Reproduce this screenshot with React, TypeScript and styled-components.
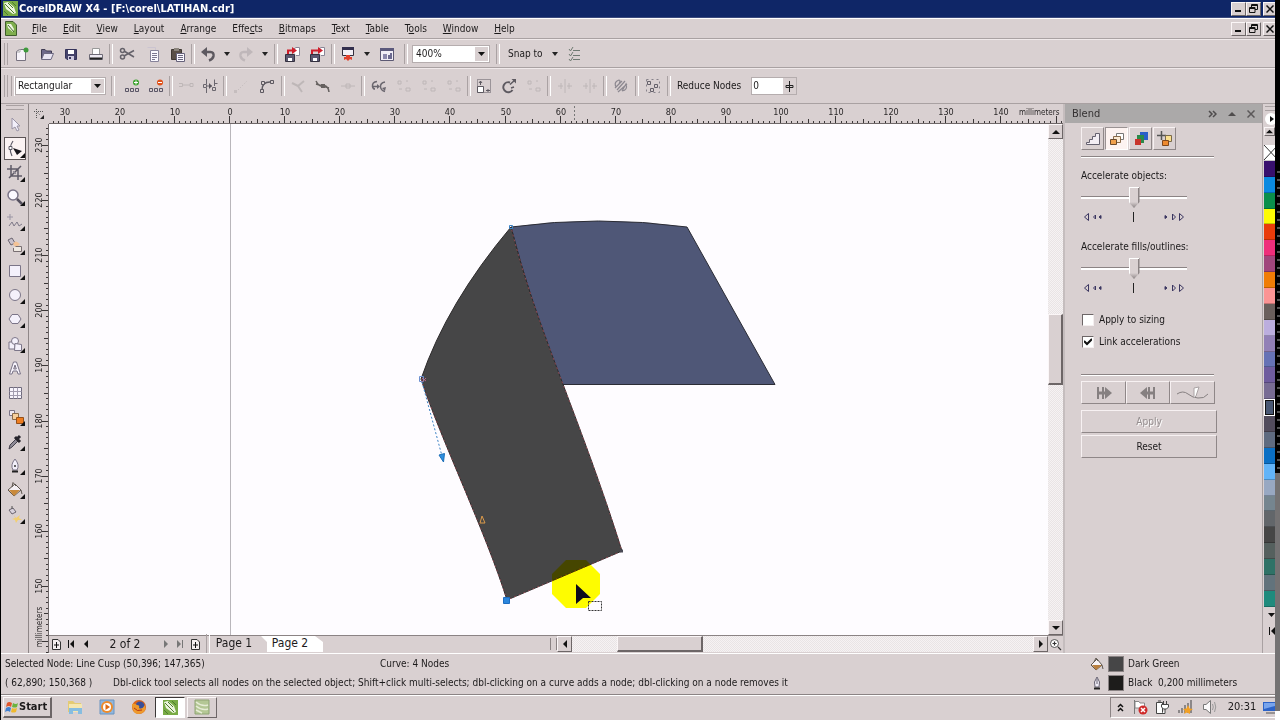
import React from "react";
import styled, { createGlobalStyle, css } from "styled-components";

const face = "#d9d0d1";
const dark = "#8b8384";
const sans = '"DejaVu Sans Condensed", "DejaVu Sans", "Liberation Sans", sans-serif';

const Global = createGlobalStyle`
  * { box-sizing: border-box; }
  html, body { margin: 0; padding: 0; }
  body { background: ${face}; color: #1c1a1b; font: 10px/14px ${sans}; white-space: nowrap; }
  button, input, select { font: inherit; color: inherit; margin: 0; }
  button { border: 0; padding: 0; background: none; }
  svg { display: block; flex: none; }
`;

const Screen = styled.div`
  display: flex;
  min-height: 100vh;
  border-left: 1px solid #000;
`;
const Main = styled.div`
  flex: 1;
  min-width: 0;
  display: flex;
  flex-direction: column;
`;
const Edge = styled.div`
  flex: none;
  width: 5px;
  background:
    repeating-linear-gradient(transparent 0 6px, rgba(120, 120, 120, 0.7) 6px 8px) 2px 165px / 3px 308px no-repeat,
    linear-gradient(#000 0 473px, #747273 473px 711px, #fff 711px);
`;

const raised = css`
  border: 1px solid;
  border-color: #fbf6f7 #6d6667 #6d6667 #fbf6f7;
  background: ${face};
`;

/* ---------- title and menu ---------- */
const TitleBar = styled.header`
  display: flex;
  align-items: center;
  height: 18px;
  padding-left: 2px;
  background: #0f2667;
  border-bottom: 1px solid #3b4a7e;
  color: #fff;
`;
const Title = styled.h1`
  flex: 1;
  margin: 0 0 0 1px;
  font: bold 11px/16px ${sans};
`;
const MenuBar = styled.nav`
  display: flex;
  align-items: center;
  height: 21px;
  padding-left: 4px;
  border-top: 1px solid #fff;
  border-bottom: 1px solid #a9a1a2;
`;
const Menus = styled.div`
  flex: 1;
  display: flex;
  gap: 16px;
  padding: 1px 0 0 15px;
`;
const MenuItem = styled.button`
  line-height: 16px;
`;
const WinButtons = styled.div`
  display: flex;
  align-items: center;
`;
const WinButton = styled.button<{ $cut?: boolean }>`
  ${raised}
  display: flex;
  align-items: center;
  justify-content: center;
  width: ${(p) => (p.$cut ? 12 : 15)}px;
  height: 14px;
  margin-left: ${(p) => (p.$cut ? 2 : 0)}px;
  border-right-width: ${(p) => (p.$cut ? 0 : 1)}px;
`;

/* ---------- toolbars ---------- */
const Bar = styled.div<{ $h: number }>`
  display: flex;
  align-items: center;
  height: ${(p) => p.$h}px;
  border-top: 1px solid #f0e9ea;
  border-bottom: 1px solid #a9a1a2;
`;
const Grip = styled.span`
  flex: none;
  width: 4px;
  height: 22px;
  margin: 0 2px 0 3px;
  border: solid #aaa2a3;
  border-width: 0 1px;
`;
const Sep = styled.span<{ $w?: number }>`
  flex: none;
  display: flex;
  justify-content: center;
  width: ${(p) => p.$w ?? 6}px;
  &::after {
    content: "";
    width: 2px;
    height: 20px;
    border-left: 1px solid #aaa2a3;
    border-right: 1px solid #fff;
  }
`;
const Tool = styled.button<{ $w?: number; $off?: boolean }>`
  flex: none;
  display: flex;
  align-items: center;
  justify-content: center;
  width: ${(p) => p.$w ?? 24}px;
  height: 22px;
  opacity: ${(p) => (p.$off ? 0.2 : 1)};
`;
const Combo = styled.span<{ $w: number; $pad?: number }>`
  flex: none;
  position: relative;
  display: block;
  width: ${(p) => p.$w}px;
  height: 18px;
  background: #fff;
  border: 1px solid #b5adae;
  select {
    width: 100%;
    height: 16px;
    padding: 0 ${(p) => p.$pad ?? 2}px;
    border: 0;
    background: none;
    appearance: none;
    line-height: 16px;
  }
  svg {
    position: absolute;
    top: 1px;
    right: 1px;
    background: ${face};
    pointer-events: none;
  }
`;
const BarText = styled.span`
  padding: 0 5px 0 2px;
`;
const Spin = styled.label`
  display: flex;
  align-items: center;
  padding-left: 3px;
`;
const SpinBox = styled.span`
  display: flex;
  width: 46px;
  height: 18px;
  margin-left: 5px;
  border: 1px solid #b5adae;
  background: #fff;
  input {
    width: 31px;
    padding: 0 1px;
    border: 0;
    background: none;
    outline: 0;
  }
  svg { background: ${face}; }
`;

/* ---------- work area ---------- */
const Work = styled.div`
  flex: 1;
  display: grid;
  grid-template-columns: 28px minmax(0, 1fr) 200px 12px;
`;
const Toolbox = styled.div`
  padding-top: 1px;
  border-right: 1px solid #8f8788;
`;
const BoxGrip = styled.div`
  height: 5px;
  margin: 0 4px 2px 5px;
  border: solid #a9a1a2;
  border-width: 1px 0;
`;
const BoxTools = styled.div`
  display: grid;
  grid-auto-rows: 1fr;
  height: 415px;
  padding: 0 3px;
`;
const BoxTool = styled.button<{ $on?: boolean }>`
  display: flex;
  align-items: center;
  justify-content: center;
  margin: 1px 0;
  border: 1px solid ${(p) => (p.$on ? "#5c5556" : "transparent")};
  background: ${(p) => (p.$on ? "#fbf3f3" : "none")};
`;
const Document = styled.div`
  display: grid;
  grid-template-columns: 20px minmax(0, 1fr) 15px;
  grid-template-rows: 20px minmax(0, 1fr) 18px;
`;
const Corner = styled.div`
  display: flex;
  align-items: center;
  justify-content: center;
`;
const HRuler = styled.div`
  grid-column: 2 / 4;
  display: grid;
  overflow: hidden;
  border-bottom: 1px solid #6f6869;
`;
const VRuler = styled.div`
  grid-row: 2 / 4;
  display: grid;
  overflow: hidden;
  border-right: 1px solid #6f6869;
`;
const RulerSvg = styled.svg`
  width: 100%;
  height: 100%;
  font: 9px ${sans};
  fill: #2a2728;
`;
const Canvas = styled.div`
  display: grid;
  overflow: hidden;
  background: #fefcff;
`;
const CanvasSvg = styled.svg`
  width: 100%;
  height: 100%;
`;
const dither = css`
  background: repeating-conic-gradient(#e9e4e5 0 25%, #f6f2f3 0 50%) 0 0 / 2px 2px;
`;
const VScroll = styled.div`
  ${dither}
  display: grid;
  grid-template-rows: 15px 176fr 71px 236fr 15px;
`;
const ScrollButton = styled.button`
  ${raised}
  display: flex;
  align-items: center;
  justify-content: center;
`;
const Thumb = styled.span`
  ${raised}
  border-right-width: 2px;
  border-bottom-width: 2px;
`;
const Foot = styled.div`
  grid-column: 2 / 4;
  display: flex;
  height: 17px;
  border-top: 1px solid #8b8384;
`;
const Pages = styled.div`
  flex: none;
  display: flex;
  align-items: center;
  width: 501px;
`;
const PageCount = styled.span`
  width: 64px;
  text-align: center;
  font-size: 12px;
`;
const NavButton = styled.button<{ $w: number }>`
  display: flex;
  align-items: center;
  justify-content: center;
  width: ${(p) => p.$w}px;
  height: 15px;
`;
const PageTab = styled.button<{ $on?: boolean }>`
  align-self: stretch;
  width: ${(p) => (p.$on ? 62 : 50)}px;
  padding: 0 8px 2px ${(p) => (p.$on ? 4 : 4)}px;
  font-size: 12px;
  background: ${(p) => (p.$on ? "#fff" : "none")};
  clip-path: ${(p) => (p.$on ? "polygon(0 0, calc(100% - 8px) 0, 100% 6px, 100% 100%, 6px 100%, 6px 6px)" : "none")};
`;
const Splitter = styled.span`
  width: 7px;
  margin: 2px 0;
  border: solid #8b8384;
  border-width: 0 1px;
`;
const HScroll = styled.div`
  ${dither}
  flex: 1;
  display: grid;
  grid-template-columns: 15px 45fr 86px 331fr 15px;
`;
const ZoomCorner = styled.button`
  display: flex;
  align-items: center;
  justify-content: center;
  width: 15px;
`;

/* ---------- docker ---------- */
const Docker = styled.aside`
  border-left: 2px solid #c5bdbe;
  border-right: 1px solid #a9a1a2;
`;
const DockHead = styled.div`
  display: flex;
  align-items: center;
  height: 19px;
  padding: 0 2px 0 7px;
  background: #aba9a9;
  color: #343132;
  font-size: 11px;
  span { flex: 1; }
  button { width: 19px; display: flex; justify-content: center; }
`;
const DockBody = styled.div`
  padding: 4px 0 0 16px;
`;
const ModeRow = styled.div`
  display: flex;
  gap: 1px;
`;
const Mode = styled.button<{ $on?: boolean }>`
  ${raised}
  display: flex;
  align-items: center;
  justify-content: center;
  width: 23px;
  height: 23px;
  border-color: ${(p) => (p.$on ? "#9a9293 #fff #fff #9a9293" : "#f7f1f2 #8f8788 #8f8788 #f7f1f2")};
  background: ${(p) => (p.$on ? "#fdf3f1" : face)};
`;
const Rule = styled.div<{ $top: number }>`
  width: 133px;
  height: 2px;
  margin-top: ${(p) => p.$top}px;
  border-top: 1px solid #8b8384;
  border-bottom: 1px solid #fff;
`;
const Field = styled.label<{ $top: number }>`
  display: block;
  height: 45px;
  margin-top: ${(p) => p.$top}px;
`;
const Slider = styled.input`
  display: block;
  width: 106px;
  height: 21px;
  margin-top: 4px;
  appearance: none;
  background: linear-gradient(#8b8384 0 1px, #fff 1px 3px) 0 9px / 106px 3px no-repeat;
  &::-webkit-slider-thumb {
    appearance: none;
    width: 11px;
    height: 21px;
    background:
      linear-gradient(#fff, #fff) 0 0 / 10px 1px no-repeat,
      linear-gradient(transparent, #8b8384) 0 15px / 11px 6px no-repeat,
      linear-gradient(90deg, #fff 0 1px, ${face} 1px 9px, ${dark} 9px);
    clip-path: polygon(0 0, 100% 0, 100% 15px, 50% 100%, 0 15px);
  }
`;
const Hints = styled.svg`
  width: 106px;
  height: 14px;
  margin-top: 2px;
`;
const Check = styled.label<{ $top: number }>`
  display: flex;
  align-items: center;
  height: 14px;
  margin-top: ${(p) => p.$top}px;
`;
const Tick = styled.span`
  position: relative;
  width: 12px;
  height: 12px;
  margin: 0 5px 0 1px;
  input {
    display: block;
    width: 12px;
    height: 12px;
    appearance: none;
    background: #fff;
    border: 1px solid;
    border-color: #6d6667 #f4eeef #f4eeef #6d6667;
  }
  svg { position: absolute; top: 2px; left: 2px; display: none; pointer-events: none; }
  input:checked + svg { display: block; }
`;
const EndRow = styled.div`
  display: grid;
  grid-template-columns: 45px 44px 45px;
  height: 23px;
  margin: 5px 0 6px;
`;
const PushButton = styled.button<{ $dim?: boolean }>`
  ${raised}
  display: flex;
  align-items: center;
  justify-content: center;
  border-color: #f7f1f2 #8f8788 #8f8788 #f7f1f2;
  color: ${(p) => (p.$dim ? "#958e8f" : "inherit")};
  text-shadow: ${(p) => (p.$dim ? "1px 1px #fff" : "none")};
`;
const WideButton = styled(PushButton)`
  width: 136px;
  height: 23px;
  margin-bottom: 2px;
`;

/* ---------- colour palette ---------- */
const Palette = styled.div`
  display: flex;
  flex-direction: column;
  padding-left: 1px;
  overflow: hidden;
`;
const PaletteTop = styled.div`
  height: 41px;
  display: flex;
  flex-direction: column;
  gap: 2px;
  padding-top: 2px;
`;
const PaletteTail = styled.div`
  height: 46px;
  display: flex;
  flex-direction: column;
  gap: 8px;
  padding-top: 4px;
`;
const PaletteGrip = styled(BoxGrip)`
  margin: 0 0 0 1px;
`;
const Swatch = styled.button<{ $c: string; $on?: boolean }>`
  flex: 1;
  min-height: 0;
  overflow: hidden;
  background: ${(p) => p.$c};
  border: ${(p) => (p.$on ? "1px solid #fff" : "0 solid")};
  border-bottom: 1px solid ${(p) => (p.$on ? "#fff" : "rgba(0,0,0,.22)")};
  box-shadow: ${(p) => (p.$on ? "inset 0 0 0 1px #111" : "none")};
`;

/* ---------- status and taskbar ---------- */
const Status = styled.footer`
  display: grid;
  grid-template-columns: minmax(0, 1fr) 186px;
  height: 42px;
  padding: 0 0 3px 4px;
  border-top: 1px solid #fff;
  border-bottom: 1px solid #8b8384;
`;
const StatusLine = styled.div<{ $gap: number }>`
  display: flex;
  align-items: center;
  height: 19px;
  > :first-child { width: ${(p) => p.$gap}px; }
`;
const ColorLine = styled.div`
  display: flex;
  align-items: center;
  height: 19px;
  padding-left: 1px;
  gap: 4px;
`;
const Chip = styled.span<{ $c: string }>`
  width: 16px;
  height: 16px;
  background: ${(p) => p.$c};
  border: 1px solid #8a8384;
`;
const TaskBar = styled.div`
  display: flex;
  align-items: center;
  height: 25px;
  padding: 0 0 2px 2px;
  border-top: 1px solid #fff;
`;
const Start = styled.button`
  ${raised}
  display: flex;
  align-items: center;
  width: 49px;
  height: 21px;
  margin-right: 7px;
  padding-left: 1px;
  border-right-width: 2px;
  border-bottom-width: 2px;
  font-weight: bold;
  font-size: 11px;
`;
const Task = styled.button<{ $look?: "on" | "up" }>`
  display: flex;
  align-items: center;
  justify-content: center;
  width: ${(p) => (p.$look ? 30 : 32)}px;
  height: 21px;
  margin-right: ${(p) => (p.$look ? 2 : 0)}px;
  ${(p) => p.$look === "up" && raised}
  ${(p) => p.$look === "on" && "background:#fff;border:1px solid;border-color:#3c3838 #fff #fff #3c3838;"}
`;
const Tray = styled.div`
  display: flex;
  align-items: center;
  height: 21px;
  margin-left: auto;
  border: solid;
  border-width: 1px 0 1px 1px;
  border-color: #8b8384 #fff #fff #8b8384;
`;
const TrayButton = styled.button<{ $w: number }>`
  display: flex;
  align-items: center;
  justify-content: center;
  width: ${(p) => p.$w}px;
  height: 19px;
`;
const Clock = styled.time`
  width: 42px;
  text-align: center;
  font-size: 11px;
`;

/* ---------- icons ---------- */
type IcProps = { w?: number; h?: number; children: React.ReactNode; vb?: string };
const Ic = ({ w = 16, h = 16, vb, children }: IcProps) => (
  <svg width={w} height={h} viewBox={vb ?? `0 0 ${w} ${h}`} fill="none" aria-hidden="true">
    {children}
  </svg>
);
const Tri = ({ d, c = "#111", s = 8 }: { d: "u" | "d" | "l" | "r"; c?: string; s?: number }) => {
  const p = { u: "M0 6L4 2L8 6Z", d: "M0 2L4 6L8 2Z", l: "M6 0L2 4L6 8Z", r: "M2 0L6 4L2 8Z" }[d];
  return <Ic w={s} h={s} vb="0 0 8 8"><path d={p} fill={c} /></Ic>;
};
const Caret = () => <Ic w={6} h={4}><path d="M0 0H6L3 4Z" fill="#222" /></Ic>;
const DropMark = ({ h = 14 }: { h?: number }) => (
  <Ic w={13} h={h}><path d={`M3 ${h / 2 - 2}H10L6.5 ${h / 2 + 2}Z`} fill="#111" /></Ic>
);
const CorelIcon = ({ s = 15 }: { s?: number }) => (
  <Ic w={s} h={s} vb="0 0 15 15">
    <path d="M0 0H15V15H0Z" fill="#79ab45" />
    <path d="M1 2L5 1L11 6L13 12L10 13L3 8Z" fill="#eef5df" />
    <path d="M2 3L11 12M5 2L10 7" stroke="#4d7d2c" />
    <path d="M9 1L13 5M1 10L5 14" stroke="#4d7d2c" />
  </Ic>
);
const DocIcon = () => (
  <Ic w={12} h={15}>
    <path d="M.5.5H8L11.5 4V14.5H.5Z" fill="#7fae4d" stroke="#3f5d2b" />
    <path d="M2 3L6 3L9 8L8 11L3 7Z" fill="#eff5e2" /><path d="M3 4L9 11" stroke="#44702b" />
  </Ic>
);
const Restore = () => <Ic w={9} h={9}><path d="M2.500 3V.5H8.500V5.500H6M2 1.500H8M.5 3.500H6V8.500H.5ZM.5 4.500H6" stroke="#111" /></Ic>;
const Minim = () => <Ic w={9} h={9}><path d="M1 7H7" stroke="#111" strokeWidth="2" /></Ic>;
const Cross = ({ c = "#111" }: { c?: string }) => <Ic w={8} h={8}><path d="M.5.5L7.500 7.500M7.500.5L.5 7.500" stroke={c} strokeWidth="1.500" /></Ic>;

const g = "#5d5960";
const NewIcon = () => <Ic><path d="M2.500 5.500L5.500 3.500H11.500V14.500H2.500Z" fill="#f7f3fa" stroke="#77727f" /><path d="M3 6H6V3" stroke="#aaa" /><circle cx="12" cy="4" r="2.500" fill="#3e9a3c" /></Ic>;
const OpenIcon = () => <Ic><path d="M2.500 13V3.500H6L7.500 5H12.500V7" stroke="#3f3b52" fill="#6d688a" /><path d="M2.500 13.500L5 7.500H14.500L12 13.500Z" fill="#e8e4f2" stroke="#6e6a82" /></Ic>;
const SaveIcon = () => <Ic><path d="M2.500 3.500H13.500V13.500H4L2.500 12Z" fill="#45436b" stroke="#35335a" /><path d="M5 4H11V8H5Z" fill="#fff" /><path d="M5 10H11V14H5Z" fill="#cfcbe0" /><path d="M6 11H8V13H6Z" fill="#35335a" /></Ic>;
const PrintIcon = () => <Ic><path d="M4.500 8V2.500H11.500V8" fill="#fff" stroke="#999" /><path d="M1.500 8.500H14.500V13.500H1.500Z" fill="#eeeaf2" stroke="#6d6a76" /><path d="M2 12.500H14" stroke="#222" strokeWidth="2" /></Ic>;
const CutIcon = () => <Ic><path d="M5 5L15 11M5 10L15 4.500" stroke="#65626a" strokeWidth="1.500" /><circle cx="3.500" cy="4.500" r="2" stroke="#65626a" strokeWidth="1.500" /><circle cx="3.500" cy="11" r="2" stroke="#65626a" strokeWidth="1.500" /></Ic>;
const CopyIcon = () => <Ic><path d="M2.500 1.500H10.500V4" stroke="#cbc4d0" /><path d="M5.500 4.500H13.500V15.500H5.500Z" fill="#fbf9ff" stroke="#87839a" /><path d="M7 7.500H12M7 9.500H12M7 11.500H12M7 13.500H10" stroke="#7b7790" /></Ic>;
const PasteIcon = () => <Ic><path d="M1.500 3.500H11.500V13.500H1.500Z" fill="#5a4f47" stroke="#3f3833" /><path d="M4 2H9V5H4Z" fill="#8b847c" /><path d="M6.500 7.500H14.500V15.500H6.500Z" fill="#fbf9ff" stroke="#66627a" /><path d="M8 9.500H13M8 11.500H13M8 13.500H13" stroke="#6b6780" /></Ic>;
const UndoIcon = ({ flip }: { flip?: boolean }) => (
  <Ic><g transform={flip ? "translate(16 0) scale(-1 1)" : undefined}>
    <path d="M5 6H10.500Q14 6 13.500 10Q13 13 9 14.500" stroke={g} strokeWidth="2.500" /><path d="M1 6L7 1V11Z" fill={g} />
  </g></Ic>
);
const TransferIcon = ({ out }: { out?: boolean }) => (
  <Ic><path d="M1.500 8.500H10.500V15.500H1.500Z" fill="#5b5870" stroke="#33303f" /><path d="M4 12H8V15H4Z" fill="#fff" />
    <path d="M9 3.500L12 1.500H15.500V9.500H12" fill="#fff" stroke="#8a8697" />
    <path d={out ? "M3 8V4.500H9" : "M4 8V4.500H9"} stroke="#cf1d2a" strokeWidth="2" /><path d={out ? "M9 1L14 4.500L9 8Z" : "M8 1L13 4.500L8 8Z"} fill="#cf1d2a" /></Ic>
);
const LaunchIcon = () => <Ic><path d="M2.500 1.500H13.500V9.500H2.500Z" fill="#f3f0f6" stroke="#332f3d" /><path d="M2 1H14V4H2Z" fill="#332f4d" /><path d="M6 9H10V11H12V14L10 13L8 15L6 13L4 14V11H6Z" fill="#e2402c" /></Ic>;
const WelcomeIcon = () => <Ic><path d="M1.500 2.500H14.500V14.500H1.500Z" fill="#f1eef7" stroke="#5c5973" /><path d="M1 2H15V5H1Z" fill="#5b597c" /><path d="M4 8H8V13H4Z" fill="#8b88ad" /><path d="M9 9H11V13H9ZM11 7H13V13H11Z" fill="#6c6a90" /></Ic>;
const OptionsIcon = () => <Ic><path d="M2 3L3.500 5L6 1M2 8L3.500 10L6 6M2 13L3.500 15L6 11M6 4.500H13M6 9.500H13M6 13.500H13" stroke="#6f7a72" /></Ic>;

const NodeIcon = ({ plus }: { plus?: boolean }) => (
  <Ic><path d="M1.500 10.500H4.500V13.500H1.500ZM6.500 10.500H9.500V13.500H6.500ZM11.500 10.500H14.500V13.500H11.500Z" stroke="#5b5767" />
    <circle cx="12" cy="4.500" r="3" fill={plus ? "#3da32f" : "#e0521b"} /><path d={plus ? "M10 4.500H14M12 2.500V6.500" : "M10 4.500H14"} stroke="#fff" /></Ic>
);
const JoinIcon = () => <Ic><path d="M1 8.500H4.500V5.500H1M12 5.500H15V8.500H12ZM5 7H12" stroke="#555" /></Ic>;
const BreakIcon = () => <Ic><path d="M4.500 1V6M4.500 10V15M12.500 5V8M1.500 6.500H4.500V9.500H1.500ZM10.500 9.500H13.500V12.500H10.500ZM12.500 1.500V5.500H15.500M5 8H10" stroke="#6a666e" /><path d="M7 5L10 8L7 11Z" fill="#5a565e" /></Ic>;
const LineIcon = () => <Ic><path d="M3 14L14 3" stroke="#555" strokeDasharray="1 2" /><path d="M1 12H4V15H1Z" fill="#777" /></Ic>;
const CurveIcon = () => <Ic><path d="M3 12Q3 4 11 4" stroke={g} strokeWidth="1.500" /><path d="M1.500 11.500H4.500V14.500H1.500ZM11.500 2.500H14.500V5.500H11.500ZM2.500 3.500H5.500V6.500H2.500Z" stroke={g} fill={face} /></Ic>;
const CuspIcon = () => <Ic><path d="M2 5L8 8L14 3M8 8L12 14" stroke="#555" strokeWidth="2" /></Ic>;
const SmoothIcon = () => <Ic><path d="M1 3Q4 9 8 8Q13 7 14 14M1 6L14 10" stroke="#65605f" strokeWidth="1.500" /><path d="M6 6H10V10H6Z" fill="#65605f" /></Ic>;
const SymIcon = () => <Ic><path d="M1 8H15M6 6H10V10H6Z" stroke="#555" /></Ic>;
const ReverseIcon = () => <Ic><path d="M6 3.500Q1 4 1.500 8.500Q2 11 4 11M2 8.500H7M14 4Q9 5 9.500 9Q10 12.500 14 13.500" stroke="#6a666e" strokeWidth="1.500" /><path d="M6 6L9 8.500L6 11ZM11 10L15 9L14 13Z" fill="#6a666e" /></Ic>;
const DotsIcon = () => <Ic><path d="M2 3H5V6H2ZM10 10H14V13H10ZM10 3H12M3 11H6" stroke="#555" /></Ic>;
const StretchIcon = () => <Ic><path d="M1.500 1.500H14.500V14.500H1.500Z" stroke={g} strokeDasharray="1 1" /><path d="M1.500 8.500H7.500V14.500H1.500Z" fill="#fff" stroke={g} /><path d="M4.500 3V7M10 12.500H14M4.500 3L3 5M4.500 3L6 5M12 11V14" stroke={g} /></Ic>;
const RotateIcon = () => <Ic><path d="M9 4.500A5 5 0 1 0 11.500 12" stroke={g} strokeWidth="2" /><path d="M9 6.500L14 2M10 10L13 9" stroke={g} strokeWidth="1.500" /><path d="M10.500 1H15V5.500Z" fill={g} /></Ic>;
const AlignIcon = () => <Ic><path d="M8 1V15M1 8H6M10 8H15M4 5V11M12 5V11" stroke="#555" /></Ic>;
const ElasticIcon = () => <Ic><path d="M3 9Q1 5 4 3L6 2Q8 2 6 6ZM9 13Q15 12 13 6L9 13M4 12L12 3M5 14L14 6M2 10L9 3" stroke="#8c8890" strokeWidth="1.200" /></Ic>;
const SelectAllIcon = () => <Ic><path d="M1.500 1.500H14.500V14.500H1.500Z" stroke="#87828a" strokeDasharray="2 3" /><path d="M2.500 3.500H5.500V6.500H2.500ZM9.500 6.500H12.500V9.500H9.500ZM5.500 10.500H8.500V13.500H5.500Z" stroke="#65616a" /></Ic>;

const fly = <path d="M20 14V19H15Z" fill="#111" />;
const Box = ({ children, more = true }: { children: React.ReactNode; more?: boolean }) => (
  <Ic w={20} h={20}>{children}{more && fly}</Ic>
);
const l = "#7b7588";
const boxTools: [string, React.ReactNode][] = [
  ["Pick", <Box more={false}><path d="M7 4V15L10 13L12 17L14 16L12 12H15Z" fill="#f2effa" stroke="#9a94a6" /></Box>],
  ["Shape", <Box><path d="M8 2Q3 9 7 17" stroke="#5c5a66" strokeWidth="1.200" /><path d="M4 7.500H7V10.500H4Z" fill="#fff" stroke="#5c5a66" /><path d="M8 9L17 12L12 16Z" fill="#16141a" /></Box>],
  ["Crop", <Box><path d="M6 2V13H17M2 6H13V17M4 15L16 3" stroke="#5f5b68" strokeWidth="1.500" /><path d="M8 8L11 11" stroke="#8f8a99" /></Box>],
  ["Zoom", <Box><circle cx="8" cy="8" r="5" fill="#fbf9ff" stroke={l} strokeWidth="1.500" /><path d="M12 12L17 17" stroke="#55515f" strokeWidth="2.500" /></Box>],
  ["Freehand", <Box><path d="M5 2V8M2 5H8" stroke="#9a95a4" /><path d="M4 14L7 10L9 14L12 10L14 14L17 12" stroke="#7d7888" /></Box>],
  ["Smart Fill", <Box><path d="M3 4L7 2L10 7L6 9Z" fill="#c9c2cc" stroke="#6b6570" /><path d="M8 8Q10 3 15 8L11 12Z" fill="#f4c396" /><path d="M10.500 10.500H16.500V15.500H8.500V12" fill="#efe9e2" stroke="#786f72" /></Box>],
  ["Rectangle", <Box><path d="M4.500 4.500H15.500V15.500H4.500Z" fill="#f4f1fb" stroke={l} /></Box>],
  ["Ellipse", <Box><circle cx="10" cy="10" r="5.500" fill="#f4f1fb" stroke={l} /></Box>],
  ["Polygon", <Box><path d="M7 5.500H13L16 10L13 14.500H7L4 10Z" fill="#f4f1fb" stroke={l} /></Box>],
  ["Basic Shapes", <Box><path d="M4 8H10V15H4Z" fill="#f4f1fb" stroke={l} /><circle cx="10" cy="7" r="3.500" fill="#f4f1fb" stroke={l} /><path d="M10 9.500L16.500 10.500V16.500H9.500Z" fill="#f4f1fb" stroke={l} /></Box>],
  ["Text", <Box more={false}><path d="M4.500 16L8.500 4H11.500L15.500 16H13L12 13H8L7 16ZM8.700 11H11.300L10 7Z" fill="#f8f5fd" stroke={l} /></Box>],
  ["Table", <Box more={false}><path d="M4.500 4.500H16.500V15.500H4.500Z" fill="#f8f5fd" stroke="#6f6a7c" /><path d="M8.500 4.500V15.500M12.500 4.500V15.500M4.500 8.500H16.500M4.500 12.500H16.500" stroke="#a39db0" /></Box>],
  ["Blend", <Box><path d="M4.500 3.500H9.500V8.500H4.500Z" fill="#eee9f2" stroke={l} /><path d="M7.500 6.500H13.500V12.500H7.500Z" fill="#f6cf9c" stroke="#8a6b4b" /><path d="M11.500 10.500H18.500V16.500H11.500Z" fill="#ee7d1f" stroke="#94501a" /></Box>],
  ["Eyedropper", <Box><path d="M4 17L5 13L11 7L13 9L7 15Z" fill="#8e8a96" stroke="#44414b" /><path d="M10 5L15 10M11 8L15 4" stroke="#26242b" strokeWidth="3" /></Box>],
  ["Outline", <Box><path d="M10 3Q5 9 8 14H12Q15 9 10 3Z" fill="#f3f0fa" stroke={l} /><circle cx="10" cy="10" r="1" fill="#333" /><path d="M7 15.500H13" stroke="#222" strokeWidth="2" /></Box>],
  ["Fill", <Box><path d="M3 10L10 4L16 10L9 16Z" fill="#f4f0f4" stroke="#5d564f" /><path d="M4 10H15L9 16Z" fill="#c98a3c" /><path d="M7 7L8 2.500L11 6M16 10L17 14" stroke="#5d564f" /></Box>],
  ["Interactive Fill", <Box><path d="M4 5L8 3L11 7L7 9Z" fill="#d8d2dc" stroke="#6b6570" /><path d="M7 4V1" stroke="#555" /><path d="M9 10L11 13L15 10L14 13L17 15L13 15L11 18L10 15L7 14L10 13Z" fill="#f3cf70" /></Box>],
];

const PlusPage = () => <Ic w={9} h={11}><path d="M.5.5H6L8.500 3V10.500H.5Z" fill="#f4eff0" stroke="#333" /><path d="M4.500 3V9M2 6H7" stroke="#111" /></Ic>;
const EndMark = ({ r, c = "#111" }: { r?: boolean; c?: string }) => <Ic w={8} h={8}><path d={r ? "M1 0L5 4L1 8Z" : "M7 0L3 4L7 8Z"} fill={c} /><path d={r ? "M6.500 0V8" : "M1.500 0V8"} stroke={c} /></Ic>;
const BucketIcon = () => <Ic w={14} h={14}><path d="M1 8L7 2L12 8L6 13Z" fill="#f7f3f5" stroke="#5d564f" /><path d="M2 8H12L6 13Z" fill="#b97f3e" /><path d="M4 5L6 1L8 4M12 8L13 12" stroke="#5d564f" /></Ic>;
const PenIcon = () => <Ic w={14} h={14}><path d="M7 1Q3 6 5 11H9Q11 6 7 1Z" fill="#f3f0fa" stroke="#65606f" /><path d="M7 3V8" stroke="#65606f" /><path d="M4 12.500H10" stroke="#222" strokeWidth="2" /></Ic>;

/* ---------- drawing data ---------- */
const UNIT = 5.51;
const HTicks = () => (
  <RulerSvg role="img" aria-label="Horizontal ruler">
    {Array.from({ length: 190 }, (_, i) => i - 32).map((n) => {
      const x = Math.round(180 + n * UNIT);
      const top = n % 10 === 0 ? 12 : n % 5 === 0 ? 15 : 17;
      return n > 152 ? null : <path key={n} d={`M${x + 0.5} ${top}V19`} stroke="#3a3637" />;
    })}
    {Array.from({ length: 18 }, (_, i) => i - 3).map((n) => (
      <text key={n} x={Math.round(181 + n * 10 * UNIT)} y="11" textAnchor="middle">{Math.abs(n * 10)}</text>
    ))}
    <path d="M525.500 2V18" stroke="#777" strokeDasharray="2 2" />
    <text x="970" y="11" fontSize="8">millimeters</text>
  </RulerSvg>
);
const VTicks = () => (
  <RulerSvg role="img" aria-label="Vertical ruler">
    {Array.from({ length: 96 }, (_, i) => i - 3).map((n) => {
      const y = Math.round(21 + n * UNIT);
      const left = n % 10 === 0 ? 13 : n % 5 === 0 ? 15 : 17;
      return <path key={n} d={`M${left} ${y + 0.5}H19`} stroke="#3a3637" />;
    })}
    {Array.from({ length: 9 }, (_, n) => (
      <text key={n} transform={`translate(13 ${Math.round(21 + n * 10 * UNIT)}) rotate(-90)`} textAnchor="middle">{230 - n * 10}</text>
    ))}
    <text transform="translate(13 503) rotate(-90)" textAnchor="middle" fontSize="8">millimeters</text>
  </RulerSvg>
);

const Artwork = () => (
  <CanvasSvg role="img" aria-label="Drawing">
    <g transform="translate(-49 -124)" fill="none">
      <path d="M230.500 120V900" stroke="#b9b6bb" />
      <path d="M511 227Q598 215 687 227L775 384.500H561Q530 300 511 227Z" fill="#4f5777" stroke="#2b2c35" />
      <path d="M511 227Q447 303 421 379C441 440 485 530 507 600L622 551C581 420 535 325 511 227Z" fill="#464647" stroke="#2d2b2c" />
      <path d="M421 379C441 440 485 530 507 600L622 551C581 420 535 325 511 227" stroke="#a4525a" strokeDasharray="2 3" strokeWidth="0.800" />
      <path d="M422 382L442 456" stroke="#3b82c4" strokeDasharray="2 2" />
      <path d="M439 455L444.500 453.500L443.500 462Z" fill="#2e8fe0" stroke="#1c6fb8" />
      <path d="M509.500 225.500H512.500V228.500H509.500Z" stroke="#3b82c4" />
      <path d="M419.500 376.500H423.500V381.500H419.500Z" stroke="#6b8fd0" /><path d="M422 378L426 381M422 382L426 378" stroke="#b86a8a" />
      <path d="M480 523L482 516L485 523Z" stroke="#dc9a4a" />
      <path d="M503.500 597.500H509.500V603.500H503.500Z" fill="#2b86dd" stroke="#1d6cc0" />
      <path d="M620 549.500H623V552.500H620Z" fill="#4a4a55" />
      <path d="M566 560H586L600 574V594L586 608H566L552 594V574Z" fill="#ff0" style={{ mixBlendMode: "multiply" }} />
      <path d="M576 584L591 598H583L576 604Z" fill="#0c0a1c" />
      <path d="M588.500 601.500H601.500V610.500H588.500Z" stroke="#333" strokeDasharray="2 1" />
    </g>
  </CanvasSvg>
);

const menus: [string, string, string][] = [
  ["", "F", "ile"], ["", "E", "dit"], ["", "V", "iew"], ["", "L", "ayout"], ["", "A", "rrange"], ["Effe", "c", "ts"],
  ["", "B", "itmaps"], ["", "T", "ext"], ["", "T", "able"], ["T", "o", "ols"], ["", "W", "indow"], ["", "H", "elp"],
];
const swatches = [
  "#38106e", "#0b8ae0", "#0a8f4b", "#fdfb04", "#e93c0a", "#ee2e7b", "#a0467c", "#f07d06", "#fb9494", "#6a5f5c",
  "#bcaede", "#9280b6", "#6672b5", "#6f5c9e", "#786c94", "#495874", "#524c5c", "#5f6b80", "#0a6fc4", "#62b4f8",
  "#98a8c2", "#75858f", "#62666a", "#464646", "#55605e", "#2f7267", "#62737c", "#1f8b7d",
];

const WindowControls = () => (
  <WinButtons>
    <WinButton aria-label="Minimize"><Minim /></WinButton>
    <WinButton aria-label="Restore"><Restore /></WinButton>
    <WinButton $cut aria-label="Close"><Cross /></WinButton>
  </WinButtons>
);

const Acceleration = ({ label, top }: { label: string; top: number }) => (
  <Field $top={top}>
    {label}
    <Slider type="range" defaultValue={50} />
    <Hints viewBox="0 0 106 14" fill="none" stroke="#3a3560">
      <path d="M7.500 3.500V10.500L3.500 7ZM14.500 5V9L12.500 7ZM98.500 3.500V10.500L102.500 7ZM91.500 4V10L94.500 7Z" />
      <path d="M18 7L20 5.500V8.500ZM86 7L84 5.500V8.500Z" fill="#3a3560" />
      <path d="M52.500 2V12" stroke="#222" />
    </Hints>
  </Field>
);

export default function App() {
  return (
    <>
      <Global />
      <Screen>
        <Main>
          <TitleBar>
            <CorelIcon />
            <Title>CorelDRAW X4 - [F:\corel\LATIHAN.cdr]</Title>
            <WindowControls />
          </TitleBar>
          <MenuBar>
            <DocIcon />
            <Menus>
              {menus.map(([a, u, b]) => <MenuItem key={a + u + b}>{a}<u>{u}</u>{b}</MenuItem>)}
            </Menus>
            <WindowControls />
          </MenuBar>

          <Bar $h={29}>
            <Grip />
            <Tool aria-label="New"><NewIcon /></Tool>
            <Tool $w={25} aria-label="Open"><OpenIcon /></Tool>
            <Tool aria-label="Save"><SaveIcon /></Tool>
            <Tool $w={25} aria-label="Print"><PrintIcon /></Tool>
            <Sep />
            <Tool $w={26} aria-label="Cut"><CutIcon /></Tool>
            <Tool $w={26} aria-label="Copy"><CopyIcon /></Tool>
            <Tool aria-label="Paste"><PasteIcon /></Tool>
            <Sep />
            <Tool aria-label="Undo"><UndoIcon /></Tool>
            <Tool $w={14} aria-label="Undo list"><Caret /></Tool>
            <Tool $off aria-label="Redo"><UndoIcon flip /></Tool>
            <Tool $w={14} aria-label="Redo list"><Caret /></Tool>
            <Sep $w={8} />
            <Tool aria-label="Import"><TransferIcon /></Tool>
            <Tool $w={26} aria-label="Export"><TransferIcon out /></Tool>
            <Sep />
            <Tool aria-label="Application launcher"><LaunchIcon /></Tool>
            <Tool $w={14} aria-label="Launcher list"><Caret /></Tool>
            <Tool $w={26} aria-label="Welcome screen"><WelcomeIcon /></Tool>
            <Sep $w={12} />
            <Combo $w={78} $pad={3}>
              <select aria-label="Zoom level"><option>400%</option></select>
              <DropMark />
            </Combo>
            <Sep $w={16} />
            <BarText as="button">Snap to</BarText>
            <Tool $w={14} aria-label="Snap list"><Caret /></Tool>
            <Tool $w={26} aria-label="Options"><OptionsIcon /></Tool>
          </Bar>

          <Bar $h={36}>
            <Grip />
            <Sep $w={5} as="i" hidden />
            <Combo $w={91}>
              <select aria-label="Selection mode"><option>Rectangular</option></select>
              <DropMark />
            </Combo>
            <Sep $w={14} />
            <Tool aria-label="Add node"><NodeIcon plus /></Tool>
            <Tool aria-label="Delete node"><NodeIcon /></Tool>
            <Sep />
            <Tool $off aria-label="Join nodes"><JoinIcon /></Tool>
            <Tool aria-label="Break curve"><BreakIcon /></Tool>
            <Sep />
            <Tool $w={26} $off aria-label="To line"><LineIcon /></Tool>
            <Tool $w={26} aria-label="To curve"><CurveIcon /></Tool>
            <Sep />
            <Tool $off aria-label="Cusp"><CuspIcon /></Tool>
            <Tool $w={26} aria-label="Smooth"><SmoothIcon /></Tool>
            <Tool $off aria-label="Symmetrical"><SymIcon /></Tool>
            <Sep />
            <Tool $w={26} aria-label="Reverse"><ReverseIcon /></Tool>
            <Tool $off aria-label="Extend"><DotsIcon /></Tool>
            <Tool $w={26} $off aria-label="Extract"><DotsIcon /></Tool>
            <Tool $off aria-label="Close curve"><DotsIcon /></Tool>
            <Sep />
            <Tool aria-label="Stretch"><StretchIcon /></Tool>
            <Tool $w={26} aria-label="Rotate"><RotateIcon /></Tool>
            <Tool $off aria-label="Align"><DotsIcon /></Tool>
            <Sep />
            <Tool $w={26} $off aria-label="Reflect horizontally"><AlignIcon /></Tool>
            <Tool $off aria-label="Reflect vertically"><AlignIcon /></Tool>
            <Sep />
            <Tool $w={26} aria-label="Elastic mode"><ElasticIcon /></Tool>
            <Sep />
            <Tool $w={26} aria-label="Select all"><SelectAllIcon /></Tool>
            <Sep />
            <Spin>
              <BarText>Reduce Nodes</BarText>
              <SpinBox>
                <input defaultValue="0" />
                <Ic w={13} h={16}><path d="M3 7.500H10V9.500H3ZM6.500 3V14" stroke="#222" /></Ic>
              </SpinBox>
            </Spin>
          </Bar>

          <Work>
            <Toolbox>
              <BoxGrip />
              <BoxTools>
                {boxTools.map(([n, icon]) => <BoxTool key={n} aria-label={n} $on={n === "Shape"}>{icon}</BoxTool>)}
              </BoxTools>
            </Toolbox>

            <Document>
              <Corner>
                <Ic w={12} h={12}><path d="M1 3.500H10M3.500 1V10M3 3L7 7" stroke="#555" strokeDasharray="1 1" /><path d="M11 7V11H7Z" fill="#222" /></Ic>
              </Corner>
              <HRuler><HTicks /></HRuler>
              <VRuler><VTicks /></VRuler>
              <Canvas><Artwork /></Canvas>
              <VScroll>
                <ScrollButton aria-label="Scroll up"><Tri d="u" /></ScrollButton>
                <span />
                <Thumb />
                <span />
                <ScrollButton aria-label="Scroll down"><Tri d="d" /></ScrollButton>
              </VScroll>
              <Foot>
                <Pages>
                  <NavButton $w={14} aria-label="Add page before"><PlusPage /></NavButton>
                  <NavButton $w={16} aria-label="First page"><EndMark /></NavButton>
                  <NavButton $w={14} aria-label="Previous page"><Tri d="l" /></NavButton>
                  <PageCount>2 of 2</PageCount>
                  <NavButton $w={18} aria-label="Next page"><Tri d="r" c="#777" /></NavButton>
                  <NavButton $w={10} aria-label="Last page"><EndMark r c="#777" /></NavButton>
                  <NavButton $w={20} aria-label="Add page after"><PlusPage /></NavButton>
                  <Sep />
                  <PageTab>Page 1</PageTab>
                  <PageTab $on>Page 2</PageTab>
                </Pages>
                <Splitter />
                <HScroll>
                  <ScrollButton aria-label="Scroll left"><Tri d="l" /></ScrollButton>
                  <span />
                  <Thumb />
                  <span />
                  <ScrollButton aria-label="Scroll right"><Tri d="r" /></ScrollButton>
                </HScroll>
                <ZoomCorner aria-label="Navigator">
                  <Ic w={13} h={13}><circle cx="5.500" cy="5.500" r="4" stroke="#555" fill="#fff" /><path d="M5.500 3.500V7.500M3.500 5.500H7.500M9 9L12 12" stroke="#333" strokeWidth="1.200" /></Ic>
                </ZoomCorner>
              </Foot>
            </Document>

            <Docker>
              <DockHead>
                <span>Blend</span>
                <button aria-label="Collapse"><Ic w={9} h={8}><path d="M1 1L4 4L1 7M5 1L8 4L5 7" stroke="#4f4c4d" strokeWidth="1.500" /></Ic></button>
                <button aria-label="Roll up"><Tri d="u" c="#4f4c4d" /></button>
                <button aria-label="Close docker"><Cross c="#5b5859" /></button>
              </DockHead>
              <DockBody>
                <ModeRow>
                  <Mode aria-label="Steps"><Ic><path d="M1.500 13.500V11.500H4.500V8.500H7.500V5.500H10.500V2.500H14.500V13.500Z" fill="#f3eef4" stroke="#65616f" /></Ic></Mode>
                  <Mode $on aria-label="Acceleration"><Ic><path d="M7.500 2.500H14.500V8.500H7.500Z" fill="#fff" stroke="#777" /><path d="M4.500 5.500H11.500V11.500H4.500Z" fill="#fbe9d2" stroke="#8a6b4b" /><path d="M1.500 8.500H7.500V13.500H1.500Z" fill="#f0a04b" stroke="#6b4a2c" /></Ic></Mode>
                  <Mode aria-label="Color"><Ic><path d="M7 1H15V9H7Z" fill="#2a5fc8" /><path d="M4 4H11V12H4Z" fill="#2b8a4a" /><path d="M2 8H8V14H2Z" fill="#c8352c" /></Ic></Mode>
                  <Mode aria-label="Misc"><Ic><path d="M4.500 0V9M0 4.500H9" stroke="#555" strokeWidth="1.500" /><path d="M8.500 4.500H14.500V10.500H8.500Z" fill="#fbe08f" stroke="#7a6a4a" /><path d="M5.500 9.500H11.500V14.500H5.500Z" fill="#ee8a2f" stroke="#80481c" /></Ic></Mode>
                </ModeRow>
                <Rule $top={6} />
                <Acceleration label="Accelerate objects:" top={11} />
                <Acceleration label="Accelerate fills/outlines:" top={26} />
                <Check $top={28}>
                  <Tick><input type="checkbox" /><Ic w={8} h={8}><path d="M0 3L3 6L8 1" stroke="#111" strokeWidth="2" /></Ic></Tick>
                  Apply to sizing
                </Check>
                <Check $top={8}>
                  <Tick><input type="checkbox" defaultChecked /><Ic w={8} h={8}><path d="M0 3L3 6L8 1" stroke="#111" strokeWidth="2" /></Ic></Tick>
                  Link accelerations
                </Check>
                <Rule $top={25} />
                <EndRow>
                  <PushButton aria-label="Start object"><Ic><path d="M2 2V14M7 2V14" stroke="#868081" strokeWidth="2" /><path d="M2 8H11" stroke="#868081" strokeWidth="3" /><path d="M9 2L16 8L9 14Z" fill="#868081" /></Ic></PushButton>
                  <PushButton aria-label="End object"><Ic><path d="M14 2V14M9 2V14" stroke="#868081" strokeWidth="2" /><path d="M5 8H14" stroke="#868081" strokeWidth="3" /><path d="M7 2L0 8L7 14Z" fill="#868081" /></Ic></PushButton>
                  <PushButton aria-label="Path"><Ic w={34} h={16}><path d="M1 9Q7 5 12 9T22 13Q28 14 32 9" stroke="#868081" /><path d="M18 3V13L20 11L22 5L23 2Z" fill="#fff" stroke="#aaa3a4" /></Ic></PushButton>
                </EndRow>
                <WideButton $dim>Apply</WideButton>
                <WideButton>Reset</WideButton>
              </DockBody>
            </Docker>

            <Palette>
              <PaletteTop>
                <PaletteGrip />
                <button aria-label="Palette menu"><Ic w={11} h={12}><circle cx="7" cy="6" r="6" fill="#fff" /><path d="M6 3L10 6L6 9Z" fill="#111" /></Ic></button>
                <ScrollButton aria-label="Previous colors"><Tri d="u" s={7} /></ScrollButton>
              </PaletteTop>
              <Swatch $c="#fff" aria-label="No color"><Ic w={11} h={15}><path d="M0 0L14 15M14 0L0 15" stroke="#333" /></Ic></Swatch>
              {swatches.map((c) => <Swatch key={c} $c={c} $on={c === "#495874"} aria-label={c} />)}
              <PaletteTail>
                <button aria-label="More colors"><Ic w={11} h={8}><path d="M4 2H11L7.500 6Z" fill="#111" /></Ic></button>
                <button aria-label="Expand palette"><Ic w={11} h={8}><path d="M5.500 0V8" stroke="#111" /><path d="M11 0L7 4L11 8Z" fill="#111" /></Ic></button>
              </PaletteTail>
            </Palette>
          </Work>

          <Status>
            <div>
              <StatusLine $gap={375}><span>Selected Node: Line Cusp (50,396; 147,365)</span><span>Curve: 4 Nodes</span></StatusLine>
              <StatusLine $gap={108}>
                <span>( 62,890; 150,368 )</span>
                <span>Dbl-click tool selects all nodes on the selected object; Shift+click multi-selects; dbl-clicking on a curve adds a node; dbl-clicking on a node removes it</span>
              </StatusLine>
            </div>
            <div>
              <ColorLine><BucketIcon /><Chip $c="#464647" /><span>Dark Green</span></ColorLine>
              <ColorLine><PenIcon /><Chip $c="#1d1c1b" /><span>Black&nbsp; 0,200 millimeters</span></ColorLine>
            </div>
          </Status>

          <TaskBar>
            <Start>
              <Ic w={14} h={14}><path d="M2 3Q4 1 7 3L6 7Q4 5 1 7Z" fill="#e0552b" /><path d="M8 3Q11 5 13 3L12 7Q10 8 7 7Z" fill="#6cb33f" /><path d="M1 8Q4 6 6 8L5 12Q3 10 0 12Z" fill="#3f7fd0" /><path d="M7 8Q9 9 12 8L11 12Q8 13 6 12Z" fill="#f0b92e" /></Ic>
              Start
            </Start>
            <Task aria-label="Explorer"><Ic><path d="M1 2H6L8 4H14V13H1Z" fill="#e3cb74" /><path d="M2 5H15V13H2Z" fill="#f5e7b0" /><path d="M2 9H15V15H11V12H6V15H2Z" fill="#86bde0" /></Ic></Task>
            <Task aria-label="Media player"><Ic><path d="M1 1H15V15H1Z" fill="#8fb6dd" stroke="#6b94c0" /><circle cx="8" cy="8" r="6" fill="#ee8b2a" /><circle cx="8" cy="8" r="4" fill="#fff" /><path d="M6.500 5L11 8L6.500 11Z" fill="#dd6a12" /></Ic></Task>
            <Task aria-label="Firefox"><Ic><circle cx="8" cy="8" r="7" fill="#d9651c" /><circle cx="9" cy="7" r="4.500" fill="#3a4f98" /><path d="M1 5Q4 4 6 6Q9 6 8 9Q11 11 14 6Q16 14 8 15Q1 15 1 5Z" fill="#ee9a2d" /><path d="M3 9Q6 13 11 11" stroke="#b8340f" /></Ic></Task>
            <Task $look="on" aria-label="CorelDRAW"><CorelIcon /></Task>
            <Task $look="up" aria-label="Corel window"><Ic><path d="M1 1H15V15H1Z" fill="#b4c795" stroke="#8fa474" /><path d="M2 3Q8 8 14 6M2 7Q8 12 14 10M2 11L8 14" stroke="#e6ecd6" strokeWidth="1.500" /></Ic></Task>
            <Tray>
              <TrayButton $w={18} aria-label="Show hidden icons"><Ic w={7} h={9}><path d="M1 4L3.500 1.500L6 4M1 8L3.500 5.500L6 8" stroke="#111" strokeWidth="1.500" /></Ic></TrayButton>
              <TrayButton $w={22} aria-label="Action center"><Ic><path d="M2.500 1V15" stroke="#777" /><path d="M3 2.500H7L8 4H12.500V9H3Z" fill="#fff" stroke="#888" /><circle cx="11" cy="11" r="4.500" fill="#cf2a2a" /><path d="M9 9L13 13M13 9L9 13" stroke="#fff" strokeWidth="1.500" /></Ic></TrayButton>
              <TrayButton $w={22} aria-label="Power"><Ic><path d="M2.500 3.500H8.500V14.500H2.500Z" fill="#fff" stroke="#444" /><path d="M4 2H7" stroke="#444" /><path d="M7.500 5.500H14.500V8L12.500 10H9.500L7.500 8ZM9.500 2V5M12.500 2V5M11 10V14.500H8" fill="#fff" stroke="#444" /></Ic></TrayButton>
              <TrayButton $w={24} aria-label="Network"><Ic><path d="M2 11V14M5 9V14M8 6V14M11 4V14M14 1V14" stroke="#8b8788" strokeWidth="2" /><path d="M11 6L12.500 9.500L16 10L13 12L13 15L10 13.500L7 15L8 12L6 10L9.500 9.500Z" fill="#f2a024" /></Ic></TrayButton>
              <TrayButton $w={24} aria-label="Volume"><Ic><path d="M2.500 5.500H5L9.500 1.500V14.500L5 10.500H2.500Z" fill="#fbf9fa" stroke="#777" /><path d="M11.500 5Q13 8 11.500 11M13.500 3Q16 8 13.500 13" stroke="#999" /></Ic></TrayButton>
              <Clock>20:31</Clock>
              <TrayButton $w={12} aria-label="Show desktop"><Ic w={12} h={14}><path d="M0 2H12V11H0Z" fill="#2c63c8" /><path d="M1 3H12V6L1 9Z" fill="#78a4ec" /><path d="M3 13H12" stroke="#555" /></Ic></TrayButton>
            </Tray>
          </TaskBar>
        </Main>
        <Edge />
      </Screen>
    </>
  );
}
